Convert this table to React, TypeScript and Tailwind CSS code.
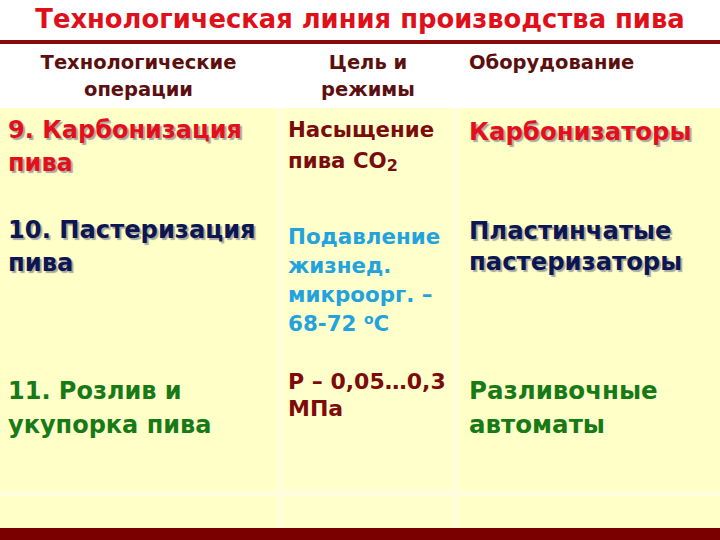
const font = { fontFamily: '"DejaVu Sans", Verdana, sans-serif' };

export default function App() {
  return (
    <div className="w-[720px] h-[540px] bg-white flex flex-col overflow-hidden font-bold" style={font}>
      {/* Title */}
      <div className="h-[40px] flex items-center justify-center">
        <h1 className="text-[25.8px] leading-none text-[#e0101a]">
          Технологическая линия производства пива
        </h1>
      </div>
      <div className="h-[4px] bg-[#8a0a0a]" />

      {/* Header */}
      <div className="h-[64px] grid grid-cols-[277px_170px_1fr] gap-x-[6px] text-[#5c0f0f] text-[19.5px] leading-[27px]">
        <div className="text-center pt-[5px]">
          Технологические
          <br />
          операции
        </div>
        <div className="text-center pt-[5px]">
          Цель и
          <br />
          режимы
        </div>
        <div className="pt-[5px] pl-[10px]">Оборудование</div>
      </div>

      {/* Body */}
      <div className="flex-1 flex flex-col bg-[#fefedc]">
        <div className="grid grid-cols-[277px_170px_1fr] gap-x-[6px] h-[90px]">
          <div className="bg-[#ffffc8] pl-[8px] pt-[6px] text-[24px] leading-[33px] text-[#e3101c] [text-shadow:2px_2px_1px_#a8a8a0]">
            9. Карбонизация
            <br />
            пива
          </div>
          <div className="bg-[#ffffcc] pl-[5px] pt-[6px] text-[21.3px] leading-[31px] text-[#7b0c0c]">
            Насыщение
            <br />
            пива CO<sub className="text-[16px] relative top-[3px]">2</sub>
          </div>
          <div className="bg-[#ffffc8] pl-[10px] pt-[7px] text-[24.4px] leading-[33px] text-[#e3101c] [text-shadow:2px_2px_1px_#a8a8a0]">
            Карбонизаторы
          </div>
        </div>

        <div className="grid grid-cols-[277px_170px_1fr] gap-x-[6px] h-[154px]">
          <div className="bg-[#ffffc8] pl-[8px] pt-[16px] text-[24.2px] leading-[33px] text-[#0c1650] [text-shadow:2px_2px_1px_#a8a8a0]">
            10. Пастеризация
            <br />
            пива
          </div>
          <div className="bg-[#ffffcc] pl-[5px] pt-[24px] text-[21.4px] leading-[29px] text-[#22a3df]">
            Подавление
            <br />
            жизнед.
            <br />
            микроорг. –
            <br />
            68-72 <sup className="text-[14px]">o</sup>C
          </div>
          <div className="bg-[#ffffc8] pl-[10px] pt-[17px] text-[24.3px] leading-[31px] text-[#0c1650] [text-shadow:2px_2px_1px_#a8a8a0]">
            Пластинчатые
            <br />
            пастеризаторы
          </div>
        </div>

        <div className="grid grid-cols-[277px_170px_1fr] gap-x-[6px] h-[138px]">
          <div className="bg-[#ffffc8] pl-[8px] pt-[22px] text-[24px] leading-[34px] text-[#177a17]">
            11. Розлив и
            <br />
            укупорка пива
          </div>
          <div className="bg-[#ffffcc] pl-[5px] pt-[16px] text-[22px] leading-[27px] text-[#7d0b0b]">
            Р – 0,05…0,3
            <br />
            МПа
          </div>
          <div className="bg-[#ffffc8] pl-[10px] pt-[22px] text-[24.5px] leading-[34px] text-[#177a17]">
            Разливочные
            <br />
            автоматы
          </div>
        </div>

        <div className="grid grid-cols-[277px_170px_1fr] gap-x-[6px] mt-[6px] flex-1">
          <div className="bg-[#ffffc8]" />
          <div className="bg-[#ffffcc]" />
          <div className="bg-[#ffffc8]" />
        </div>
      </div>

      <div className="h-[12px] bg-[#7a0000]" />
    </div>
  );
}
